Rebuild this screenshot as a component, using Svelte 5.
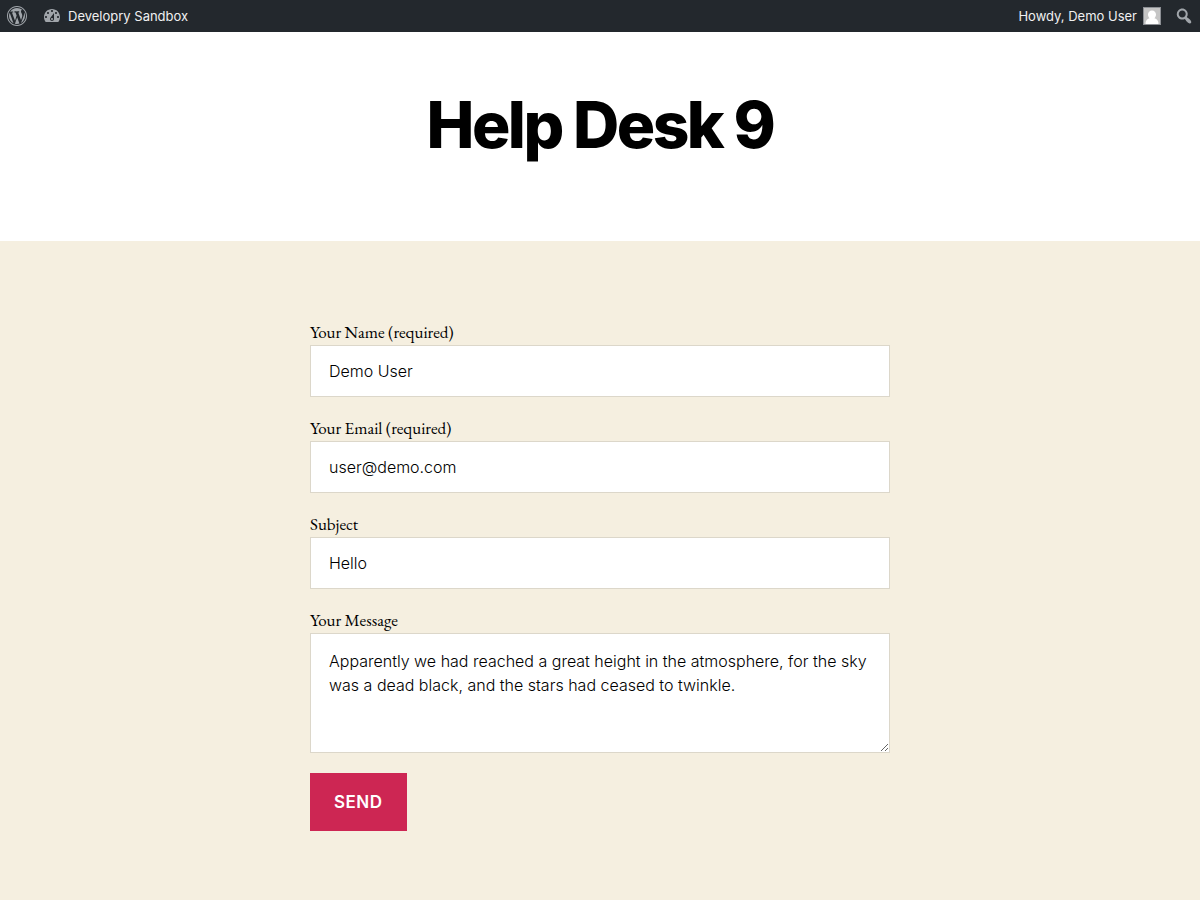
<script>
  let name = $state('Demo User');
  let email = $state('user@demo.com');
  let subject = $state('Hello');
  let message = $state(
    'Apparently we had reached a great height in the atmosphere, for the sky was a dead black, and the stars had ceased to twinkle.'
  );
</script>

<nav class="bar" aria-label="Toolbar">
  <a class="item logo" href="#about" aria-label="About WordPress">
    <svg viewBox="0 0 20 20" aria-hidden="true"><path d="M20 10c0-5.52-4.48-10-10-10S0 4.48 0 10s4.48 10 10 10 10-4.48 10-10zM10 1.01c4.97 0 8.99 4.02 8.99 8.99s-4.02 8.99-8.99 8.99S1.01 14.97 1.01 10 5.03 1.01 10 1.01zM8.01 14.82L4.96 6.61c.49-.03 1.05-.08 1.05-.08.43-.05.38-1.01-.06-.99 0 0-1.29.1-2.13.1-.15 0-.33 0-.52-.01 1.44-2.17 3.9-3.6 6.7-3.6 2.09 0 3.99.79 5.41 2.09-.6-.08-1.45.35-1.45 1.42 0 .66.38 1.22.79 1.88.31.54.5 1.22.5 2.21 0 1.34-1.27 4.48-1.27 4.48l-2.71-7.5c.48-.03.75-.16.75-.16.43-.05.38-1.1-.05-1.08 0 0-1.3.11-2.14.11-.78 0-2.11-.11-2.11-.11-.43-.02-.48 1.06-.05 1.08l.84.08 1.12 3.04zm6.02 2.15L16.64 10s.67-1.69.39-3.81c.63 1.14.94 2.42.94 3.81 0 2.96-1.56 5.58-3.94 6.97zM2.68 6.77L6.5 17.25c-2.67-1.3-4.47-4.08-4.47-7.25 0-1.16.2-2.23.65-3.23zm7.45 4.53l2.29 6.25c-.75.27-1.57.42-2.42.42-.72 0-1.41-.11-2.06-.3z" /></svg>
  </a>
  <a class="item site" href="#dashboard">
    <svg viewBox="0 0 20 20" aria-hidden="true"><path d="M3.76 16h12.48c1.1-1.37 1.76-3.11 1.76-5 0-4.42-3.58-8-8-8s-8 3.58-8 8c0 1.89.66 3.63 1.76 5zM10 4c.55 0 1 .45 1 1s-.45 1-1 1-1-.45-1-1 .45-1 1-1zM6 6c.55 0 1 .45 1 1s-.45 1-1 1-1-.45-1-1 .45-1 1-1zm8 0c.55 0 1 .45 1 1s-.45 1-1 1-1-.45-1-1 .45-1 1-1zm-5.37 5.55L12 7v6c0 1.1-.9 2-2 2s-2-.9-2-2c0-.57.24-1.08.63-1.45zM4 10c.55 0 1 .45 1 1s-.45 1-1 1-1-.45-1-1 .45-1 1-1zm12 0c.55 0 1 .45 1 1s-.45 1-1 1-1-.45-1-1 .45-1 1-1zm-5 3c0-.55-.45-1-1-1s-1 .45-1 1 .45 1 1 1 1-.45 1-1z" /></svg>
    <span>Developry Sandbox</span>
  </a>
  <a class="item account" href="#profile">
    <span>Howdy, Demo User</span>
    <svg class="avatar" viewBox="0 0 18 18" aria-hidden="true">
      <rect width="18" height="18" fill="#8c8f94" />
      <rect x="1" y="1" width="16" height="16" fill="#c5c5c5" />
      <path fill="#fff" d="M9 3.6c2.3 0 4 1.7 4 4 0 1.5-.6 2.8-1.6 3.6 2.2.5 3.6 2 4 4.2V17H2.6v-1.6c.4-2.2 1.8-3.7 4-4.2C5.6 10.4 5 9.1 5 7.6c0-2.3 1.7-4 4-4z" />
    </svg>
  </a>
  <button class="item search" type="button" aria-label="Search">
    <svg viewBox="0 0 20 20" aria-hidden="true"><path d="M12.14 4.18c1.87 1.87 2.11 4.75.72 6.89.12.1.22.21.36.31.2.16.47.36.81.59.34.24.56.39.66.47.42.31.73.57.94.78.32.32.6.65.84 1 .25.35.44.69.59 1.04.14.35.21.68.18 1-.02.32-.14.59-.36.81s-.49.34-.81.36c-.31.02-.65-.04-.99-.19-.35-.14-.7-.34-1.04-.59-.35-.24-.68-.52-1-.84-.21-.21-.47-.52-.77-.93-.1-.13-.25-.35-.47-.66-.22-.32-.4-.57-.56-.78-.16-.2-.29-.35-.44-.5-2.07 1.09-4.69.76-6.44-.98-2.14-2.15-2.14-5.64 0-7.78 2.15-2.15 5.63-2.15 7.78 0zm-1.41 6.36c1.36-1.37 1.36-3.58 0-4.95-1.37-1.37-3.59-1.37-4.95 0-1.37 1.37-1.37 3.58 0 4.95 1.36 1.37 3.58 1.37 4.95 0z" /></svg>
  </button>
</nav>

<main>
  <header>
    <h1>Help Desk 9</h1>
  </header>

  <form onsubmit={(event) => event.preventDefault()}>
    <div class="field">
      <label for="name">Your Name (required)</label>
      <input id="name" type="text" required bind:value={name} />
    </div>
    <div class="field">
      <label for="email">Your Email (required)</label>
      <input id="email" type="email" required bind:value={email} />
    </div>
    <div class="field">
      <label for="subject">Subject</label>
      <input id="subject" type="text" bind:value={subject} />
    </div>
    <div class="field">
      <label for="message">Your Message</label>
      <textarea id="message" bind:value={message}></textarea>
    </div>
    <button class="send" type="submit">Send</button>
  </form>
</main>

<style>
  :global(body) {
    margin: 0;
    background: #f5efe0;
    color: #000;
    font-family: Inter, 'Liberation Sans', sans-serif;
  }

  .bar {
    display: flex;
    align-items: center;
    height: 32px;
    background: #23282d;
    color: #f0f0f1;
    font-size: 13px;
    line-height: 32px;
  }

  .item {
    display: flex;
    align-items: center;
    gap: 6px;
    height: 32px;
    color: inherit;
    text-decoration: none;
  }

  .item svg {
    width: 20px;
    height: 20px;
    fill: #a0a5aa;
  }

  .logo {
    padding: 0 7px;
  }

  .site {
    padding: 0 8px;
  }

  .account {
    margin-left: auto;
    padding: 0 7px;
  }

  .item .avatar {
    width: 18px;
    height: 18px;
  }

  .search {
    padding: 0 6px;
    border: 0;
    background: none;
  }

  header {
    padding: 57px 20px 80px;
    background: #fff;
    text-align: center;
  }

  h1 {
    margin: 0;
    font-size: 64px;
    font-weight: 800;
    line-height: 72px;
    letter-spacing: -0.04em;
  }

  form {
    box-sizing: border-box;
    max-width: 620px;
    margin: 0 auto;
    padding: 80px 20px;
  }

  .field {
    display: flex;
    flex-direction: column;
    gap: 2px;
    margin-bottom: 20px;
  }

  label {
    align-self: flex-start;
    font-family: 'EB Garamond', 'Liberation Serif', serif;
    font-size: 17px;
    line-height: 22px;
  }

  input,
  textarea {
    box-sizing: border-box;
    width: 100%;
    margin: 0;
    padding: 13px 18px;
    border: 1px solid #dcd7ca;
    border-radius: 0;
    background: #fff;
    color: #000;
    font-family: inherit;
    font-size: 16px;
    font-weight: 350;
    line-height: 24px;
  }

  input {
    height: 52px;
  }

  textarea {
    display: block;
    height: 120px;
    padding: 15px 16px 15px 18px;
    resize: vertical;
  }

  .send {
    padding: 17px 24px;
    border: 0;
    background: #cd2653;
    color: #fff;
    font-family: inherit;
    font-size: 17px;
    font-weight: 600;
    line-height: 24px;
    letter-spacing: 0.03em;
    text-transform: uppercase;
  }
</style>
